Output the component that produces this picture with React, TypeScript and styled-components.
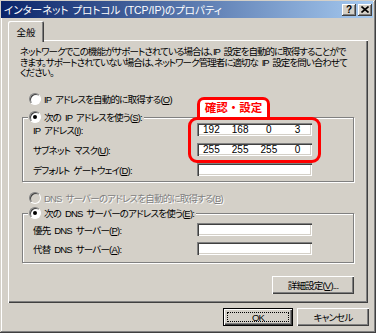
import React from "react";
import styled, { createGlobalStyle } from "styled-components";

const GlobalStyle = createGlobalStyle`
  html, body {
    margin: 0;
    padding: 0;
    background: #d4d0c8;
  }
`;

const FONT = `"Liberation Sans", "Noto Sans CJK JP", sans-serif`;

const Window = styled.div`
  width: 376px;
  height: 333px;
  box-sizing: border-box;
  padding: 1px 3px 2px 1px;
  background: #d4d0c8;
  box-shadow: inset -1px -1px #404040, inset 1px 1px #d4d0c8, inset -2px -2px #808080, inset 2px 2px #fff;
  display: flex;
  flex-direction: column;
  font-family: ${FONT};
  font-size: 9.5px;
  letter-spacing: -0.8px;
  word-spacing: 2px;
  font-feature-settings: "palt" 1;
  color: #000;
  overflow: hidden;
`;

const TitleBar = styled.div`
  height: 17px;
  display: flex;
  align-items: center;
  padding: 0 1px 0 3px;
  background: linear-gradient(to right, #0a246a, #a6caf0);
`;

const TitleText = styled.div`
  flex: 1;
  color: #fff;
  font-size: 10.5px;
  letter-spacing: 0;
  word-spacing: 1px;
  white-space: nowrap;
`;

const CaptionButton = styled.div<{ $gap?: number }>`
  width: 14px;
  height: 12px;
  box-sizing: border-box;
  margin-left: ${(p) => p.$gap ?? 0}px;
  background: #d4d0c8;
  box-shadow: inset -1px -1px #404040, inset 1px 1px #fff, inset -2px -2px #808080;
  display: flex;
  align-items: center;
  justify-content: center;
  font: bold 10px "Liberation Sans", sans-serif;
  letter-spacing: 0;
  line-height: 12px;
`;

const Content = styled.div`
  display: flex;
  flex-direction: column;
  padding: 0 5px 0 7px;
`;

const TabRow = styled.div`
  margin-top: 3px;
  height: 19px;
  display: flex;
  position: relative;
  z-index: 1;
`;

const Tab = styled.div`
  width: 36px;
  height: 21px;
  box-sizing: border-box;
  padding-top: 4px;
  text-align: center;
  letter-spacing: 0;
  background: #d4d0c8;
  border-radius: 2px 2px 0 0;
  box-shadow: inset 1px 1px #fff, inset -1px 0 #404040, inset -2px 0 #808080;
`;

const Panel = styled.div`
  display: flex;
  flex-direction: column;
  padding: 7px 2px 9px;
  box-shadow: inset 1px 1px #fff, inset -1px -1px #404040, inset -2px -2px #808080;
`;

const Description = styled.div`
  padding-left: 10px;
  line-height: 10.5px;
  letter-spacing: -0.95px;
  white-space: nowrap;
`;

const RadioRow = styled.div<{ $top?: number; $disabled?: boolean }>`
  display: flex;
  align-items: center;
  gap: 3px;
  height: 14px;
  margin-top: ${(p) => p.$top ?? 0}px;
  padding-left: 19px;
  white-space: nowrap;
  color: ${(p) => (p.$disabled ? "#808080" : "#000")};
  text-shadow: ${(p) => (p.$disabled ? "1px 1px #fff" : "none")};
`;

const Radio = styled.span<{ $checked?: boolean; $disabled?: boolean }>`
  width: 12px;
  height: 12px;
  box-sizing: border-box;
  border-radius: 50%;
  border: 1px solid;
  border-color: #808080 #fff #fff #808080;
  background: ${(p) => (p.$disabled ? "#d4d0c8" : "#fff")};
  box-shadow: inset 1px 1px #404040;
  display: flex;
  align-items: center;
  justify-content: center;
  flex-shrink: 0;

  &::after {
    content: "";
    width: 4px;
    height: 4px;
    border-radius: 50%;
    background: ${(p) => (p.$checked ? "#000" : "transparent")};
  }
`;

const GroupBox = styled.div<{ $top: number; $bottom: number }>`
  position: relative;
  margin: ${(p) => p.$top}px 12px 0;
  padding-bottom: ${(p) => p.$bottom}px;
  border: 1px solid #808080;
  box-shadow: inset 1px 1px #fff, 1px 1px #fff;
  display: flex;
  flex-direction: column;
`;

const Legend = styled.div`
  align-self: flex-start;
  height: 12px;
  margin: -7px 0 0 5px;
  padding: 0 2px 0 1px;
  background: #d4d0c8;
  display: flex;
  align-items: center;

  & > ${RadioRow} {
    padding-left: 0;
  }
`;

const Fields = styled.div<{ $top: number; $gap: number }>`
  display: flex;
  flex-direction: column;
  margin-top: ${(p) => p.$top}px;
  gap: ${(p) => p.$gap}px;
`;

const FieldRow = styled.div`
  display: flex;
  align-items: center;
  height: 13px;
  padding-left: 10px;
`;

const Label = styled.div`
  width: 164px;
  white-space: nowrap;
`;

const TextBox = styled.div`
  width: 115px;
  height: 13px;
  box-sizing: border-box;
  background: #fff;
  box-shadow: inset 1px 1px #808080, inset 2px 2px #404040, inset -1px -1px #fff, inset -2px -2px #d4d0c8;
  display: grid;
  grid-template-columns: repeat(4, 1fr);
  align-items: center;
  font-family: "Liberation Sans", sans-serif;
  font-size: 10px;
  letter-spacing: 0;
  line-height: 13px;
`;

const Octet = styled.span`
  text-align: center;
`;

const Highlight = styled.div`
  position: absolute;
  left: 165px;
  top: -1px;
  width: 133px;
  height: 46px;
  box-sizing: border-box;
  border: 3px solid #ff0000;
  border-radius: 9px;
  pointer-events: none;
`;

const Badge = styled.div`
  position: absolute;
  left: 174px;
  top: -21px;
  width: 73px;
  height: 20px;
  box-sizing: border-box;
  border: 3px solid #ff0000;
  border-bottom: 0;
  border-radius: 7px 7px 0 0;
  background: #fff;
  color: #ff0000;
  font-weight: bold;
  font-size: 11.5px;
  letter-spacing: 0;
  font-feature-settings: normal;
  line-height: 17px;
  text-align: center;
  white-space: nowrap;
`;

const ButtonRow = styled.div<{ $top: number; $right: number }>`
  display: flex;
  justify-content: flex-end;
  gap: 4px;
  margin: ${(p) => p.$top}px ${(p) => p.$right}px 0 0;
`;

const Button = styled.div<{ $width: number; $default?: boolean }>`
  position: relative;
  width: ${(p) => p.$width}px;
  height: 18px;
  box-sizing: border-box;
  background: #d4d0c8;
  box-shadow: ${(p) =>
    p.$default
      ? "inset 0 0 0 1px #000, inset 1px 1px 0 1px #fff, inset -1px -1px 0 1px #404040, inset -2px -2px 0 1px #808080"
      : "inset 1px 1px #fff, inset -1px -1px #404040, inset -2px -2px #808080"};
  display: flex;
  align-items: center;
  justify-content: center;
  white-space: nowrap;

  &::after {
    content: "";
    display: ${(p) => (p.$default ? "block" : "none")};
    position: absolute;
    inset: 4px;
    border: 1px dotted #000;
  }
`;

const IP_ADDR = ["192", "168", "0", "3"];
const SUBNET = ["255", "255", "255", "0"];

const IpField = ({ values }: { values?: string[] }) => (
  <TextBox>
    {(values ?? ["", "", "", ""]).map((v, i) => (
      <Octet key={i}>{v}</Octet>
    ))}
  </TextBox>
);

export default function App() {
  return (
    <>
      <GlobalStyle />
      <Window>
        <TitleBar>
          <TitleText>インターネット プロトコル (TCP/IP)のプロパティ</TitleText>
          <CaptionButton>?</CaptionButton>
          <CaptionButton $gap={2}>
            <svg width="8" height="7" viewBox="0 0 8 7">
              <path d="M0.5 0.5 L7.5 6.5 M7.5 0.5 L0.5 6.5" stroke="#000" strokeWidth="1.6" />
            </svg>
          </CaptionButton>
        </TitleBar>
        <Content>
          <TabRow>
            <Tab>全般</Tab>
          </TabRow>
          <Panel>
            <Description>
              ネットワークでこの機能がサポートされている場合は、IP 設定を自動的に取得することがで
              <br />
              きます。サポートされていない場合は、ネットワーク管理者に適切な IP 設定を問い合わせて
              <br />
              ください。
            </Description>
            <RadioRow $top={13.5}>
              <Radio />
              <span>IP アドレスを自動的に取得する(<u>O</u>)</span>
            </RadioRow>
            <GroupBox $top={11} $bottom={5}>
              <Legend>
                <RadioRow>
                  <Radio $checked />
                  <span>次の IP アドレスを使う(<u>S</u>):</span>
                </RadioRow>
              </Legend>
              <Fields $top={0} $gap={7}>
                <FieldRow>
                  <Label>IP アドレス(<u>I</u>):</Label>
                  <IpField values={IP_ADDR} />
                </FieldRow>
                <FieldRow>
                  <Label>サブネット マスク(<u>U</u>):</Label>
                  <IpField values={SUBNET} />
                </FieldRow>
                <FieldRow>
                  <Label>デフォルト ゲートウェイ(<u>D</u>):</Label>
                  <IpField />
                </FieldRow>
              </Fields>
              <Highlight />
              <Badge>確認・設定</Badge>
            </GroupBox>
            <RadioRow $top={9} $disabled>
              <Radio $disabled />
              <span>DNS サーバーのアドレスを自動的に取得する(<u>B</u>)</span>
            </RadioRow>
            <GroupBox $top={8} $bottom={7}>
              <Legend>
                <RadioRow>
                  <Radio $checked />
                  <span>次の DNS サーバーのアドレスを使う(<u>E</u>):</span>
                </RadioRow>
              </Legend>
              <Fields $top={4} $gap={6}>
                <FieldRow>
                  <Label>優先 DNS サーバー(<u>P</u>):</Label>
                  <IpField />
                </FieldRow>
                <FieldRow>
                  <Label>代替 DNS サーバー(<u>A</u>):</Label>
                  <IpField />
                </FieldRow>
              </Fields>
            </GroupBox>
            <ButtonRow $top={13} $right={12}>
              <Button $width={82}>詳細設定(<u>V</u>)...</Button>
            </ButtonRow>
          </Panel>
          <ButtonRow $top={5} $right={-1}>
            <Button $width={70} $default>OK</Button>
            <Button $width={72}>キャンセル</Button>
          </ButtonRow>
        </Content>
      </Window>
    </>
  );
}
